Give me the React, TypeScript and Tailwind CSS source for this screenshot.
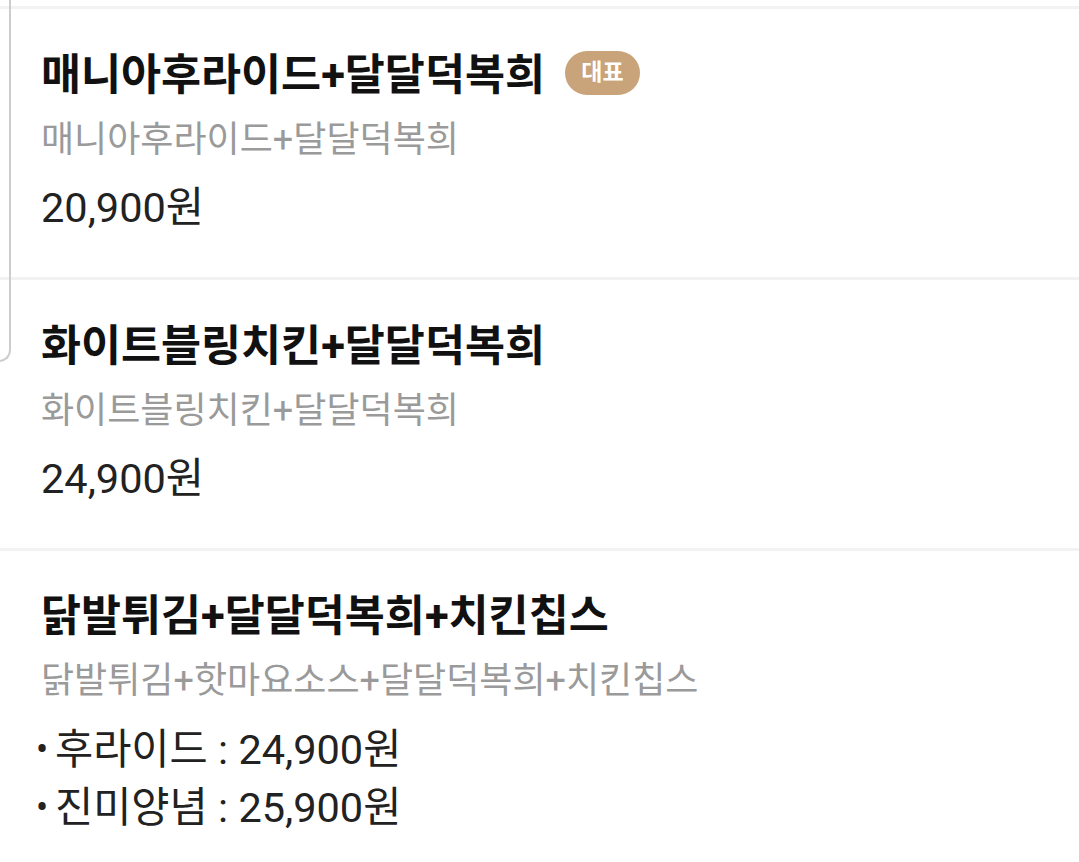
import React from 'react';

type Option = { name: string; price: string };

type MenuItem = {
  title: string;
  desc: string;
  price?: string;
  badge?: string;
  options?: Option[];
};

const menus: MenuItem[] = [
  {
    title: '매니아후라이드+달달덕복희',
    desc: '매니아후라이드+달달덕복희',
    price: '20,900원',
    badge: '대표',
  },
  {
    title: '화이트블링치킨+달달덕복희',
    desc: '화이트블링치킨+달달덕복희',
    price: '24,900원',
  },
  {
    title: '닭발튀김+달달덕복희+치킨칩스',
    desc: '닭발튀김+핫마요소스+달달덕복희+치킨칩스',
    options: [
      { name: '후라이드', price: '24,900원' },
      { name: '진미양념', price: '25,900원' },
    ],
  },
];

const font = { fontFamily: 'Roboto, "Noto Sans CJK KR", "Noto Sans", sans-serif' };

const App: React.FC = () => {
  return (
    <div className="relative w-[1079px] h-[862px] overflow-hidden bg-white" style={font}>
      {/* card edge peeking in from the left */}
      <div className="absolute left-[-30px] top-[-20px] w-[41px] h-[382px] rounded-br-[12px] border-r-2 border-b-2 border-[#cdcdcd]" />

      <div className="pt-[6px]">
        {menus.map((m, i) => (
          <div key={i} className="border-t-[3px] border-[#f2f2f2]">
            <div className={`pl-[41px] ${i === 2 ? 'pt-[42px]' : 'pt-[43px]'} pb-[45px]`}>
              <div className="flex items-center h-[48px]">
                <span className="text-[43.5px] leading-[48px] font-bold text-[#111]">{m.title}</span>
                {m.badge && (
                  <span className="ml-[20px] mt-[-6px] flex items-center justify-center w-[75px] h-[44px] rounded-full bg-[#c9a379] text-white text-[23px] font-bold">
                    {m.badge}
                  </span>
                )}
              </div>
              <div className="mt-[18px] text-[36px] leading-[44px] text-[#9a9a9a]">{m.desc}</div>
              {m.price && (
                <div className="mt-[22px] text-[41.5px] leading-[48px] text-[#222]">{m.price}</div>
              )}
              {m.options && (
                <div className="mt-[18px]">
                  {m.options.map((o) => (
                    <div key={o.name} className="flex items-center h-[58px] text-[41.5px] text-[#222]">
                      <span className="w-[19px] ml-[-5px] text-[36px] leading-none">•</span>
                      <span>
                        {o.name} : {o.price}
                      </span>
                    </div>
                  ))}
                </div>
              )}
            </div>
          </div>
        ))}
      </div>
    </div>
  );
};

export default App;
